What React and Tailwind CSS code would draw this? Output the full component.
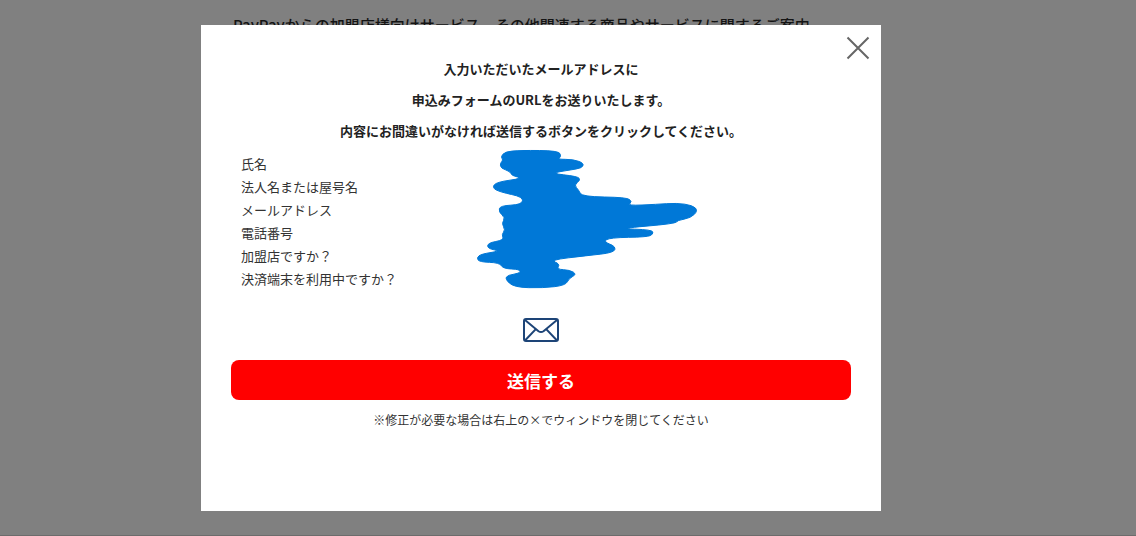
const jp = '"Noto Sans CJK JP", "Noto Sans", sans-serif';

const rows = ['氏名', '法人名または屋号名', 'メールアドレス', '電話番号', '加盟店ですか？', '決済端末を利用中ですか？'];

// outline of the blue marker scribble, in 3x coordinates of its box
const outline = [
  [106, 20], [150, 16], [266, 17], [274, 35], [262, 43], [310, 43], [342, 55], [336, 69], [300, 75], [240, 85],
  [322, 94], [332, 105], [312, 120], [326, 135], [336, 155], [470, 157], [487, 170], [472, 182], [560, 178],
  [620, 174], [668, 181], [684, 197], [662, 219], [622, 226], [616, 236], [440, 251], [547, 254], [550, 268],
  [530, 276], [420, 278], [400, 290], [437, 304], [432, 323], [350, 332], [240, 345], [270, 357], [260, 373],
  [300, 375], [320, 388], [297, 400], [287, 421], [220, 429], [132, 427], [105, 402], [114, 390], [150, 385],
  [150, 373], [100, 371], [88, 353], [28, 351], [20, 338], [34, 327], [92, 318], [53, 311], [53, 294], [102, 285],
  [95, 268], [106, 255], [95, 235], [106, 218], [86, 201], [90, 182], [155, 179], [160, 156], [90, 141], [66, 128],
  [80, 111], [160, 100], [125, 92], [120, 79], [93, 70], [90, 55], [100, 45], [92, 35],
];

const mid = (a, b) => [(a[0] + b[0]) / 2, (a[1] + b[1]) / 2];

// round the outline off: curves through the midpoints of its edges
const scribble = outline
  .map((p, i) => {
    const m = mid(p, outline[(i + 1) % outline.length]);
    return `${i === 0 ? `M${mid(outline[outline.length - 1], p).join(' ')}` : ''}Q${p.join(' ')} ${m.join(' ')}`;
  })
  .join('') + 'Z';

function Scribble() {
  return (
    <svg viewBox="0 0 720 450" className="absolute left-[269px] top-[120px] w-[240px] h-[150px]">
      <path fill="#0078d7" stroke="#0078d7" strokeWidth="3" strokeLinejoin="round" d={scribble} />
    </svg>
  );
}

function Envelope() {
  return (
    <svg viewBox="0 0 36 24" fill="none" stroke="#1d4477" strokeWidth="2" className="w-9 h-6">
      <rect x="1" y="1" width="34" height="22" rx="2" />
      <path d="M2 2l13.5 11.2q2.5 1.8 5 0L34 2" />
      <path d="M2 22.5l10.8-11.4M34 22.5L23.2 11.1" />
    </svg>
  );
}

export default function App() {
  return (
    <div className="relative h-[536px] w-[1136px] overflow-hidden bg-[#808080] border-b border-[#6c6c6c]" style={{ fontFamily: jp }}>
      {/* Page behind the overlay */}
      <p className="pl-[233px] pt-[14px] text-[15px] leading-[22px] font-medium text-[#141414] whitespace-nowrap">
        PayPayからの加盟店様向けサービス、その他関連する商品やサービスに関するご案内
      </p>

      {/* Modal */}
      <div className="absolute left-[201px] top-[25px] w-[680px] h-[486px] bg-white px-[30px] pt-[28px] text-[#333]">
        <button className="absolute right-[11px] top-[11px] size-6 text-[#666]">
          <svg viewBox="0 0 24 24" stroke="currentColor" strokeWidth="2" className="size-6">
            <path d="M1.5 1.5l21 21M22.5 1.5l-21 21" />
          </svg>
        </button>

        <div className="text-center text-[13px] leading-[31px] font-bold text-[#222]">
          <p>入力いただいたメールアドレスに</p>
          <p>申込みフォームのURLをお送りいたします。</p>
          <p>内容にお間違いがなければ送信するボタンをクリックしてください。</p>
        </div>

        <ul className="mt-[6px] pl-[10px] text-[13px] leading-[23px]">
          {rows.map((r) => (
            <li key={r}>{r}</li>
          ))}
        </ul>
        <Scribble />

        <div className="mt-[28px] flex justify-center">
          <Envelope />
        </div>

        <button className="mt-[18px] w-full h-10 rounded-lg bg-[#ff0000] pt-px text-[17px] font-bold text-white">
          送信する
        </button>

        <p className="mt-[11px] text-center text-[12px] leading-[18px]">
          ※修正が必要な場合は右上の×でウィンドウを閉じてください
        </p>
      </div>
    </div>
  );
}
